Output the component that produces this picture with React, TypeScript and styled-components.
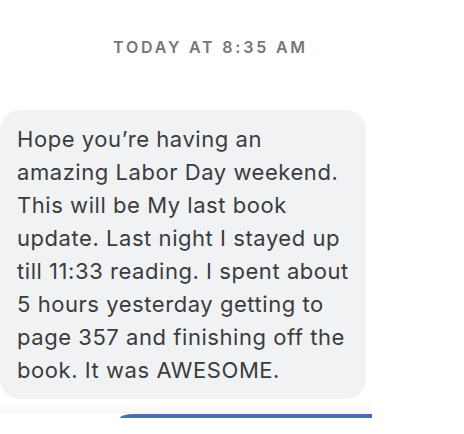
import React from "react";
import styled, { createGlobalStyle } from "styled-components";

const Global = createGlobalStyle`
  html, body { margin: 0; padding: 0; background: #ffffff; }
  #root { width: 464px; height: 434px; overflow: hidden; }
`;

const Page = styled.div`
  width: 464px;
  height: 434px;
  display: flex;
  flex-direction: column;
  background: #ffffff;
`;

const Thread = styled.div`
  width: 372px;
  display: flex;
  flex-direction: column;
`;

const Stamp = styled.div`
  padding-top: 38px;
  height: 19px;
  text-align: center;
  margin-left: 49px;
  font-family: Inter, "Liberation Sans", sans-serif;
  font-weight: 600;
  font-size: 16px;
  line-height: 19px;
  letter-spacing: 2.8px;
  color: #76767a;
`;

const Bubble = styled.div`
  margin-top: 53px;
  width: 349px;
  padding: 13px 0 12px 17px;
  background: #f1f2f4;
  border-radius: 20px;
  font-family: Inter, "Liberation Sans", sans-serif;
  font-size: 22px;
  line-height: 33px;
  letter-spacing: 0.55px;
  color: #3b3b3e;
  font-variant-ligatures: none;
`;

const Line = styled.div`
  white-space: nowrap;
`;

const Fade = styled.div`
  height: 15px;
  background: linear-gradient(#ffffff, #f8f8f8);
`;

const SentEdge = styled.div`
  margin-left: 120px;
  height: 4px;
  background: #4b6db3;
  border-top-left-radius: 14px 4px;
`;

const lines = [
  "Hope you\u2019re having an",
  "amazing Labor Day weekend.",
  "This will be My last book",
  "update. Last night I stayed up",
  "till 11:33 reading. I spent about",
  "5 hours yesterday getting to",
  "page 357 and finishing off the",
  "book. It was AWESOME.",
];

export default function App() {
  return (
    <Page>
      <Global />
      <Thread>
        <Stamp>TODAY AT 8:35 AM</Stamp>
        <Bubble>
          {lines.map((l) => (
            <Line key={l}>{l}</Line>
          ))}
        </Bubble>
        <Fade />
        <SentEdge />
      </Thread>
    </Page>
  );
}
